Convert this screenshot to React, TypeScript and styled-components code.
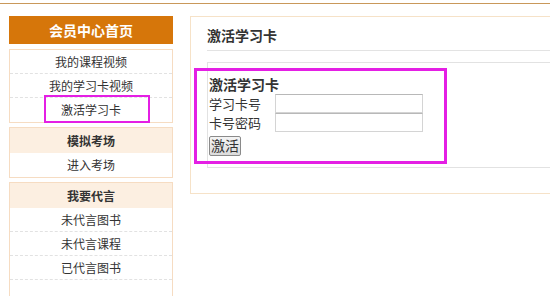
import React from "react";
import styled, { createGlobalStyle } from "styled-components";

const Global = createGlobalStyle`
  html, body { margin: 0; padding: 0; background: #fff; overflow: hidden; }
  body { font-family: "Noto Sans CJK SC", "Noto Sans", sans-serif; color: #333; }
  * { box-sizing: border-box; }
`;

const Page = styled.div`
  width: 550px;
  height: 296px;
  overflow: hidden;
  padding-top: 3px;
`;

const TopRule = styled.div`
  border-top: 1px solid #c9985a;
`;

const Layout = styled.div`
  display: flex;
  align-items: flex-start;
  gap: 17px;
  padding: 12px 0 0 9px;
`;

const Sidebar = styled.div`
  width: 164px;
  flex: none;
  display: flex;
  flex-direction: column;
  gap: 4px;
`;

const SideHead = styled.div`
  height: 28px;
  margin-bottom: 1px;
  background: #d6760a;
  color: #fff;
  font-size: 14px;
  font-weight: bold;
  line-height: 28px;
  text-align: center;
`;

const SideBox = styled.div<{ $open?: boolean }>`
  border: 1px solid #f6dcc2;
  ${(p) => (p.$open ? "border-bottom: none;" : "")}
  background: #fff;
`;

const BoxHead = styled.div`
  height: 25px;
  line-height: 25px;
  background: #fcefe1;
  font-size: 12px;
  font-weight: bold;
  text-align: center;
  color: #333;
`;

const Item = styled.div<{ $dashed?: boolean }>`
  position: relative;
  height: 24px;
  line-height: 23px;
  font-size: 12px;
  text-align: center;
  color: #333;
  border-bottom: ${(p) => (p.$dashed ? "1px dashed #e2e2e2" : "none")};
`;

const Mark = styled.div<{ $l: number; $t: number; $w: number; $h: number; $b: number }>`
  position: absolute;
  left: ${(p) => p.$l}px;
  top: ${(p) => p.$t}px;
  width: ${(p) => p.$w}px;
  height: ${(p) => p.$h}px;
  border: ${(p) => p.$b}px solid #e41fe4;
  pointer-events: none;
`;

const Main = styled.div`
  width: 400px;
  flex: none;
  border: 1px solid #f6e2c8;
  padding: 0 0 25px 16px;
`;

const Title = styled.div`
  padding: 7px 0 4px 0;
  line-height: 22px;
  font-size: 14px;
  font-weight: bold;
  color: #333;
  border-bottom: 1px solid #e3e3e3;
`;

const Card = styled.div`
  position: relative;
  margin-top: 11px;
  border: 1px solid #e2e2e2;
  border-right: none;
  padding: 12px 0 11px 1px;
`;

const FormTitle = styled.div`
  font-size: 14px;
  font-weight: bold;
  line-height: 19px;
  color: #333;
`;

const Row = styled.div`
  display: flex;
  align-items: center;
  height: 19px;
`;

const Label = styled.span`
  width: 66px;
  font-size: 13px;
  color: #333;
`;

const Input = styled.input`
  width: 148px;
  height: 19px;
  border: 1px solid #d4d4d4;
  border-top-color: #b8b8b8;
  margin: 0;
  padding: 0;
  background: #fff;
`;

const Button = styled.button`
  margin-top: 1px;
  height: 20px;
  padding: 0 1px;
  font-family: "Noto Sans CJK SC", sans-serif;
  font-size: 14px;
  line-height: 17px;
  color: #333;
  border: 1px solid #8a8a8a;
  border-radius: 2px;
  background: linear-gradient(#f4f4f4, #dcdcdc);
`;

export default function App() {
  return (
    <Page>
      <Global />
      <TopRule />
      <Layout>
        <Sidebar>
          <SideHead>会员中心首页</SideHead>
          <SideBox>
            <Item $dashed>我的课程视频</Item>
            <Item $dashed>我的学习卡视频</Item>
            <Item>
              激活学习卡
              <Mark $l={34} $t={-3} $w={106} $h={28} $b={2} />
            </Item>
          </SideBox>
          <SideBox>
            <BoxHead>模拟考场</BoxHead>
            <Item>进入考场</Item>
          </SideBox>
          <SideBox $open>
            <BoxHead>我要代言</BoxHead>
            <Item $dashed>未代言图书</Item>
            <Item $dashed>未代言课程</Item>
            <Item $dashed>已代言图书</Item>
            <Item />
          </SideBox>
        </Sidebar>
        <Main>
          <Title>激活学习卡</Title>
          <Card>
            <FormTitle>激活学习卡</FormTitle>
            <Row>
              <Label>学习卡号</Label>
              <Input />
            </Row>
            <Row>
              <Label>卡号密码</Label>
              <Input />
            </Row>
            <Button>激活</Button>
            <Mark $l={-14} $t={5} $w={253} $h={96} $b={3} />
          </Card>
        </Main>
      </Layout>
    </Page>
  );
}
